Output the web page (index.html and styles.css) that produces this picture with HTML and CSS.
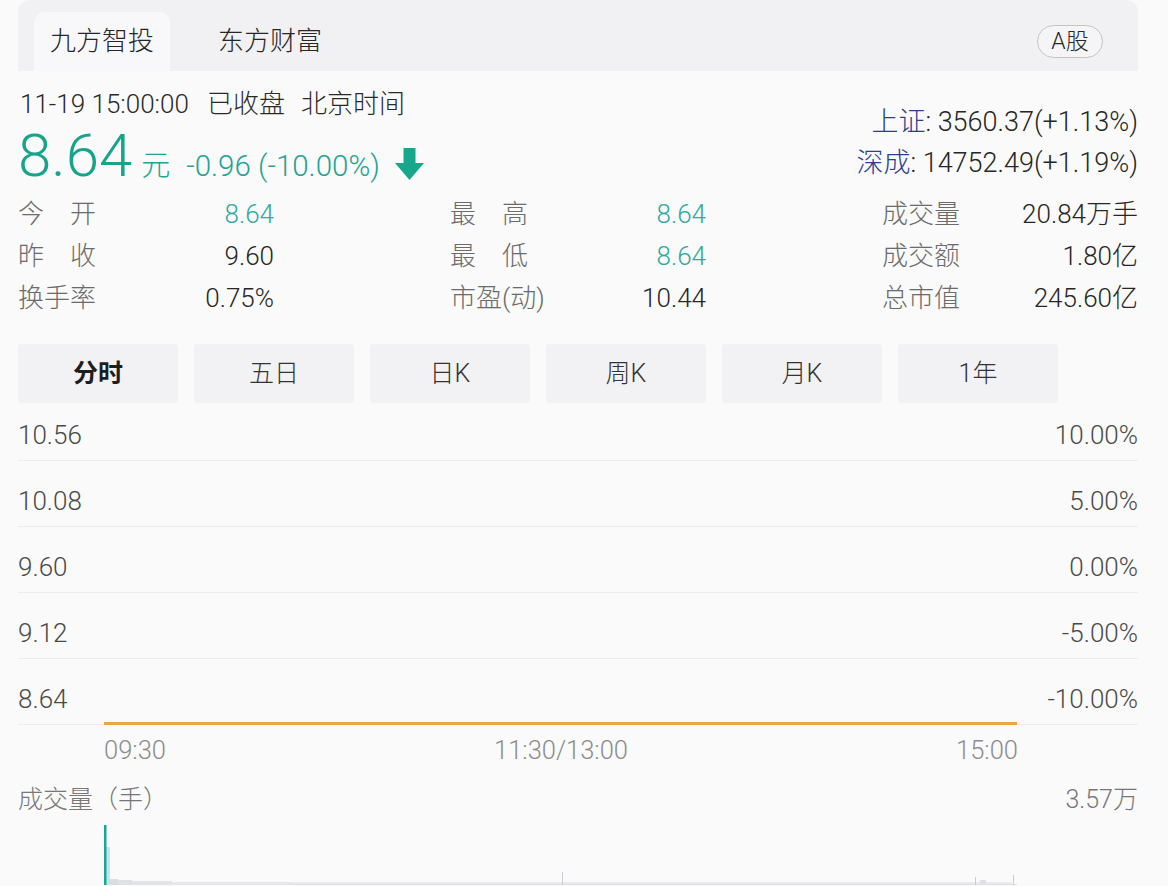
FILE: index.html
```html
<!DOCTYPE html>
<html lang="zh-CN">
<head>
<meta charset="utf-8">
<title>九方智投 行情</title>
<link rel="stylesheet" href="styles.css">
</head>
<body>
<div class="page">
  <div class="tabbar">
    <div class="tab active">九方智投</div>
    <div class="tab">东方财富</div>
    <div class="market">A股</div>
  </div>

  <div class="quote">
    <div class="quote-left">
      <div class="status"><span class="time">11-19 15:00:00</span><span class="closed">已收盘</span><span class="bj">北京时间</span></div>
      <div class="price-row">
        <span class="price">8.64</span>
        <span class="unit">元</span>
        <span class="change">-0.96 (-10.00%)</span>
        <svg class="arrow" viewBox="0 0 29 32" width="29" height="32" aria-hidden="true">
          <rect x="8.5" y="0" width="12" height="17" fill="#17a88b"/>
          <polygon points="0,15 29,15 14.5,32" fill="#17a88b"/>
        </svg>
      </div>
    </div>
    <div class="indices">
      <div><span class="idx">上证</span>: 3560.37(+1.13%)</div>
      <div><span class="idx">深成</span>: 14752.49(+1.19%)</div>
    </div>
  </div>

  <div class="stats">
    <div class="cell"><span class="lbl">今　开</span><span class="val down">8.64</span></div>
    <div class="cell"><span class="lbl">最　高</span><span class="val down">8.64</span></div>
    <div class="cell"><span class="lbl">成交量</span><span class="val">20.84万手</span></div>
    <div class="cell"><span class="lbl">昨　收</span><span class="val">9.60</span></div>
    <div class="cell"><span class="lbl">最　低</span><span class="val down">8.64</span></div>
    <div class="cell"><span class="lbl">成交额</span><span class="val">1.80亿</span></div>
    <div class="cell"><span class="lbl">换手率</span><span class="val">0.75%</span></div>
    <div class="cell"><span class="lbl">市盈(动)</span><span class="val">10.44</span></div>
    <div class="cell"><span class="lbl">总市值</span><span class="val">245.60亿</span></div>
  </div>

  <div class="periods">
    <div class="period active">分时</div>
    <div class="period">五日</div>
    <div class="period">日K</div>
    <div class="period">周K</div>
    <div class="period">月K</div>
    <div class="period">1年</div>
  </div>

  <div class="chart">
    <div class="row"><span>10.56</span><span>10.00%</span></div>
    <div class="row"><span>10.08</span><span>5.00%</span></div>
    <div class="row"><span>9.60</span><span>0.00%</span></div>
    <div class="row"><span>9.12</span><span>-5.00%</span></div>
    <div class="row"><span>8.64</span><span>-10.00%</span></div>
    <div class="price-line"></div>
  </div>

  <div class="time-axis"><span>09:30</span><span>11:30/13:00</span><span>15:00</span></div>

  <div class="vol-head"><span>成交量（手）</span><span>3.57万</span></div>

  <svg class="vol" viewBox="0 0 1120 60" width="1120" height="60" aria-hidden="true">
    <rect x="86" y="59" width="913" height="1" fill="#dcdee3"/>
    <rect x="88" y="22" width="4" height="38" fill="#c3e4ea"/>
    <rect x="92" y="54" width="8" height="6" fill="#d9dce2"/>
    <rect x="100" y="55" width="14" height="5" fill="#dfe1e6"/>
    <rect x="114" y="56" width="40" height="4" fill="#e2e4e8"/>
    <rect x="154" y="57" width="120" height="3" fill="#e6e7eb"/>
    <rect x="274" y="57" width="720" height="2" fill="#e9eaed"/>
    <rect x="544" y="47" width="1" height="13" fill="#c9ccd2"/>
    <rect x="957" y="52" width="1" height="8" fill="#c9ccd2"/>
    <rect x="962" y="55" width="6" height="5" fill="#dfe1e6"/>
    <rect x="995" y="50" width="1" height="10" fill="#c9ccd2"/>
    <rect x="86" y="0" width="2.5" height="60" fill="#1aa59a"/>
  </svg>
</div>
</body>
</html>
```

FILE: styles.css
```css
* {
  box-sizing: border-box;
}

body {
  margin: 0;
  background: #fafafa;
  font-family: Roboto, "Noto Sans CJK SC", sans-serif;
  font-weight: 300;
  color: #262626;
}

.page {
  width: 1120px;
  margin-left: 18px;
}

/* ---------- tab bar ---------- */
.tabbar {
  height: 71px;
  background: #f1f1f3;
  border-radius: 12px 12px 0 0;
  display: flex;
  align-items: flex-end;
  padding-left: 16px;
  padding-right: 35px;
}

.tab {
  height: 59px;
  padding: 0 16px;
  font-size: 26px;
  line-height: 59px;
  color: #262626;
  border-radius: 10px 10px 0 0;
}

.tab.active {
  background: #f8f8fa;
}

.tab + .tab {
  margin-left: 32px;
}

.market {
  margin-left: auto;
  align-self: flex-start;
  margin-top: 25px;
  width: 66px;
  height: 33px;
  border: 1px solid #c4c4c8;
  border-radius: 17px;
  background: #f5f5f7;
  font-size: 23px;
  line-height: 31px;
  text-align: center;
  color: #262626;
}

/* ---------- quote ---------- */
.quote {
  display: flex;
  justify-content: space-between;
  margin-top: 18px;
}

.status {
  font-size: 26px;
  line-height: 30px;
  color: #2a2a2a;
  padding-left: 2px;
}

.closed {
  margin-left: 18px;
}

.bj {
  margin-left: 16px;
}

.price-row {
  display: flex;
  align-items: baseline;
  height: 74px;
  line-height: 74px;
  color: #16a58a;
}

.price {
  font-size: 60px;
  color: #16a58a;
}

.unit {
  font-size: 29px;
  margin-left: 9px;
  color: #22a495;
}

.change {
  font-size: 29.5px;
  margin-left: 16px;
  color: #22a495;
}

.arrow {
  align-self: flex-end;
  margin-left: 15px;
  margin-bottom: 13px;
}

.indices {
  padding-top: 13px;
  font-size: 27px;
  line-height: 41px;
  text-align: right;
  color: #262626;
}

.idx {
  color: #2c3f8f;
}

/* ---------- stats ---------- */
.stats {
  display: grid;
  grid-template-columns: repeat(3, 256px);
  column-gap: 176px;
  font-size: 26px;
  line-height: 42px;
}

.cell {
  display: flex;
  justify-content: space-between;
}

.lbl {
  color: #6b6b6b;
}

.val {
  color: #262626;
}

.val.down {
  color: #2fa9a3;
}

/* ---------- periods ---------- */
.periods {
  display: flex;
  gap: 16px;
  margin-top: 25px;
}

.period {
  width: 160px;
  height: 59px;
  background: #f2f2f4;
  border-radius: 4px;
  font-size: 25px;
  line-height: 59px;
  text-align: center;
  color: #333;
}

.period.active {
  font-weight: 700;
  color: #1e1e1e;
}

/* ---------- chart ---------- */
.chart {
  position: relative;
}

.row {
  display: flex;
  justify-content: space-between;
  align-items: flex-end;
  height: 66px;
  padding-bottom: 10px;
  border-bottom: 1px solid #ececec;
  font-size: 26px;
  line-height: 30px;
  color: #4a4a4a;
}

.row:first-child {
  height: 58px;
}

.price-line {
  position: absolute;
  left: 86px;
  right: 121px;
  bottom: 0;
  height: 3px;
  background: #eaa547;
}

.time-axis {
  display: flex;
  justify-content: space-between;
  margin: 0 120px 0 86px;
  height: 50px;
  line-height: 50px;
  font-size: 25.5px;
  color: #8c8c8c;
}

.vol-head {
  display: flex;
  justify-content: space-between;
  height: 50px;
  line-height: 50px;
  font-size: 25px;
  color: #777;
}

.vol {
  display: block;
}
```
